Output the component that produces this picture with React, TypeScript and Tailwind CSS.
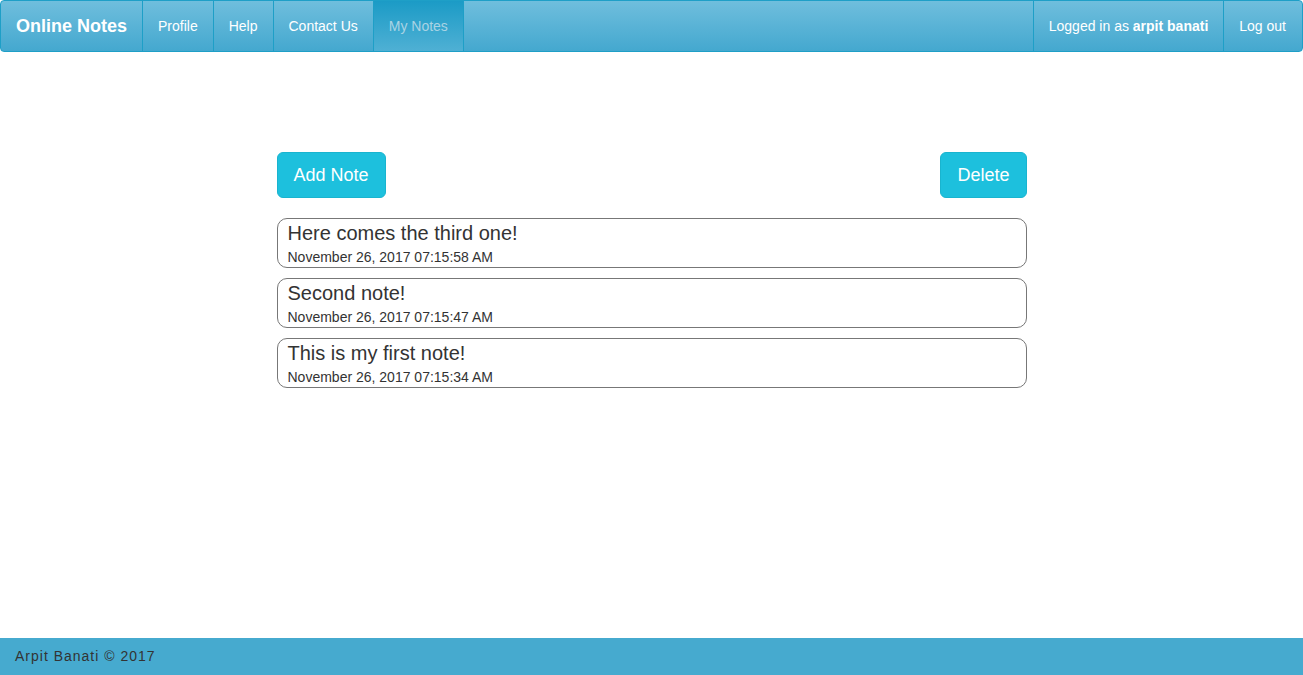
const NOTES = [
  { title: 'Here comes the third one!', date: 'November 26, 2017 07:15:58 AM' },
  { title: 'Second note!', date: 'November 26, 2017 07:15:47 AM' },
  { title: 'This is my first note!', date: 'November 26, 2017 07:15:34 AM' },
];

const NAV_LINKS = ['Profile', 'Help', 'Contact Us'];

const App = () => {
  return (
    <div className="flex min-h-screen flex-col bg-white font-['Liberation_Sans',Arial,sans-serif] text-[14px] text-[#333]">
      {/* Navbar */}
      <nav className="flex h-[52px] items-stretch rounded-[4px] border border-[#1e9fc7] bg-[linear-gradient(#6fbedd,#44a8cf)] text-white">
        <div className="flex items-center border-r border-[#1e9fc7] px-[15px] text-[18px] font-bold">
          Online Notes
        </div>
        {NAV_LINKS.map((link) => (
          <div
            key={link}
            className="flex items-center border-r border-[#1e9fc7] px-[15px]"
          >
            {link}
          </div>
        ))}
        <div className="flex items-center border-r border-[#1e9fc7] bg-[linear-gradient(#1b9bc6,#4fb0d4)] px-[15px] text-[#a9d3e4]">
          My Notes
        </div>
        <div className="ml-auto flex items-center border-l border-[#1e9fc7] px-[15px]">
          Logged in as&nbsp;<b>arpit banati</b>
        </div>
        <div className="flex items-center border-l border-[#1e9fc7] pl-[15px] pr-[16px]">
          Log out
        </div>
      </nav>

      {/* Notes */}
      <main className="flex-1">
        <div className="mx-auto mt-[100px] w-[750px]">
          <div className="flex justify-between">
            <button className="h-[46px] rounded-[6px] border border-[#19b4cf] bg-[#1dc0dd] px-[16px] text-[18px] text-white">
              Add Note
            </button>
            <button className="h-[46px] rounded-[6px] border border-[#19b4cf] bg-[#1dc0dd] px-[16px] text-[18px] text-white">
              Delete
            </button>
          </div>
          <div className="mt-[20px] flex flex-col gap-[10px]">
            {NOTES.map((note) => (
              <div
                key={note.date}
                className="h-[50px] rounded-[10px] border border-[#777] px-[10px]"
              >
                <div className="mt-[1px] text-[20px] leading-[26px]">{note.title}</div>
                <div className="mt-[2px] text-[14px] leading-[18px]">{note.date}</div>
              </div>
            ))}
          </div>
        </div>
      </main>

      {/* Footer */}
      <footer className="flex h-[37px] items-center bg-[#46aacf] px-[15px] tracking-[1px] text-[#333]">
        Arpit Banati © 2017
      </footer>
    </div>
  );
};

export default App;
